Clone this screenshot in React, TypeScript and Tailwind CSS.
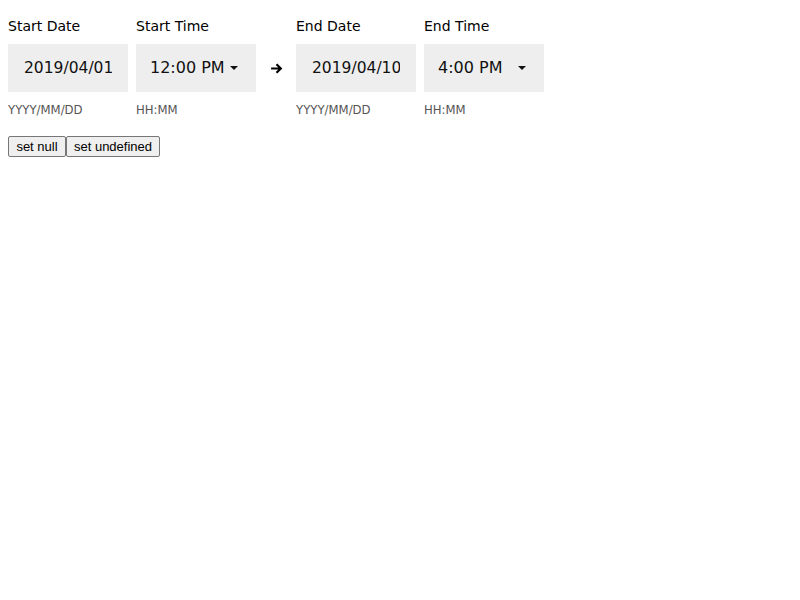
import React from "react";

const font = { fontFamily: '"DejaVu Sans", sans-serif' };

function Caret() {
  return (
    <svg width="8" height="4" viewBox="0 0 8 4" className="shrink-0">
      <path d="M0 0h8L4 4z" fill="#111" />
    </svg>
  );
}

function DateField({ label, value }: { label: string; value: string }) {
  return (
    <div className="flex flex-col w-[120px]">
      <label className="text-[14px] leading-5 text-black mb-2">{label}</label>
      <input
        readOnly
        value={value}
        className="h-12 w-[120px] bg-[#eeeeee] px-4 text-[15.5px] text-[#111] outline-none"
        style={font}
      />
      <span className="mt-[10px] text-[11.7px] leading-4 text-[#555]">YYYY/MM/DD</span>
    </div>
  );
}

function TimeField({ label, value }: { label: string; value: string }) {
  return (
    <div className="flex flex-col w-[120px]">
      <label className="text-[14px] leading-5 text-black mb-2">{label}</label>
      <div className="h-12 w-[120px] bg-[#eeeeee] pl-[14px] pr-[18px] flex items-center justify-between text-[16px] text-[#111]">
        <span>{value}</span>
        <Caret />
      </div>
      <span className="mt-[10px] text-[11.7px] leading-4 text-[#555]">HH:MM</span>
    </div>
  );
}

export default function App() {
  return (
    <div className="bg-white min-h-screen px-2 pt-4" style={font}>
      <div className="flex gap-2">
        <DateField label="Start Date" value="2019/04/01" />
        <TimeField label="Start Time" value="12:00 PM" />
        <div className="w-6 flex items-center justify-center mt-7 h-12">
          <svg width="13" height="13" viewBox="0 0 12 12">
            <path d="M1 6h9M6 2l4 4-4 4" stroke="#000" strokeWidth="2" fill="none" />
          </svg>
        </div>
        <DateField label="End Date" value="2019/04/10" />
        <TimeField label="End Time" value="4:00 PM" />
      </div>
      <div className="flex mt-[18px]" style={{ fontFamily: '"Liberation Sans", Arial, sans-serif' }}>
        <button className="h-[21px] w-[58px] text-[13px] bg-[#efefef] border border-[#767676] rounded-[2px] text-black">
          set null
        </button>
        <button className="h-[21px] w-[94px] text-[13px] bg-[#efefef] border border-[#767676] rounded-[2px] text-black">
          set undefined
        </button>
      </div>
    </div>
  );
}
